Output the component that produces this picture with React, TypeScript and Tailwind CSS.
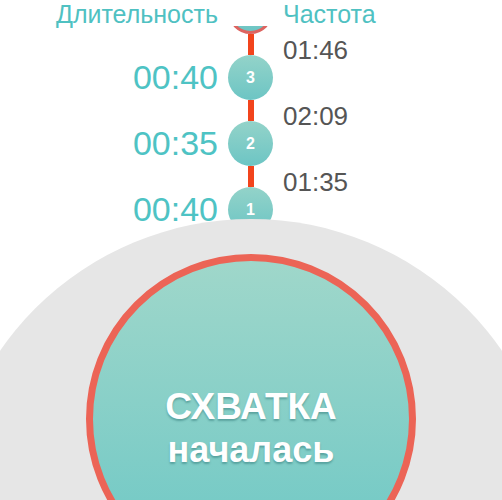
import React from 'react';

type Row = { n: number; duration?: string; active?: boolean };

const rows: Row[] = [
  { n: 4, active: true },
  { n: 3, duration: '00:40' },
  { n: 2, duration: '00:35' },
  { n: 1, duration: '00:40' },
];

const gaps = ['01:46', '02:09', '01:35'];

function Dot({ n, active }: { n: number; active?: boolean }) {
  return (
    <div
      className={
        'w-[45px] h-[45px] rounded-full bg-gradient-to-b from-[#93d3c9] to-[#6cc5c4] flex items-center justify-center text-white text-[16px] font-bold ' +
        (active ? 'border-[3px] border-[#dd6460]' : '')
      }
    >
      {active ? '' : n}
    </div>
  );
}

export default function App() {
  return (
    <div className="w-[502px] h-[500px] overflow-hidden bg-white font-['Liberation_Sans',Arial,sans-serif]">
      {/* Header */}
      <div className="relative z-10 h-[26px] bg-white grid grid-cols-[218px_65px_1fr] text-[25px] leading-[28px] text-[#4fc1c2]">
        <div className="text-right">Длительность</div>
        <div />
        <div>Частота</div>
      </div>

      {/* Timeline */}
      <div className="h-[193px] flex flex-col">
        <div className="mt-[-37px] grid grid-cols-[218px_65px_1fr]">
          {rows.map((r, i) => (
            <React.Fragment key={r.n}>
              <div className="h-[45px] flex items-center justify-end text-[34px] text-[#4ec3c4]">
                {r.duration}
              </div>
              <div className="h-[45px] flex justify-center">
                <Dot n={r.n} active={r.active} />
              </div>
              <div />
              {i < gaps.length && (
                <>
                  <div className="h-[21px]" />
                  <div className="h-[21px] flex justify-center">
                    <div className="w-[6px] h-full bg-[#f2441c]" />
                  </div>
                  <div className="h-[21px] flex items-center">
                    <span className="mt-[10px] text-[26px] leading-none text-[#555555]">{gaps[i]}</span>
                  </div>
                </>
              )}
            </React.Fragment>
          ))}
        </div>
      </div>

      {/* Start button */}
      <div className="relative z-10 ml-[-54px] w-[610px] h-[610px] rounded-full bg-[#e6e6e6] flex justify-center pt-[35px]">
        <div className="w-[330px] h-[330px] rounded-full border-[7px] border-[#ec6456] bg-gradient-to-b from-[#9fd7ca] to-[#6ac7c5] flex flex-col items-center pt-[128px] text-white font-bold [text-shadow:0_2px_2px_rgba(40,110,110,0.45)]">
          <div className="text-[37px] leading-[36px]">СХВАТКА</div>
          <div className="mt-[6px] text-[36px] leading-[38px]">началась</div>
        </div>
      </div>
    </div>
  );
}
